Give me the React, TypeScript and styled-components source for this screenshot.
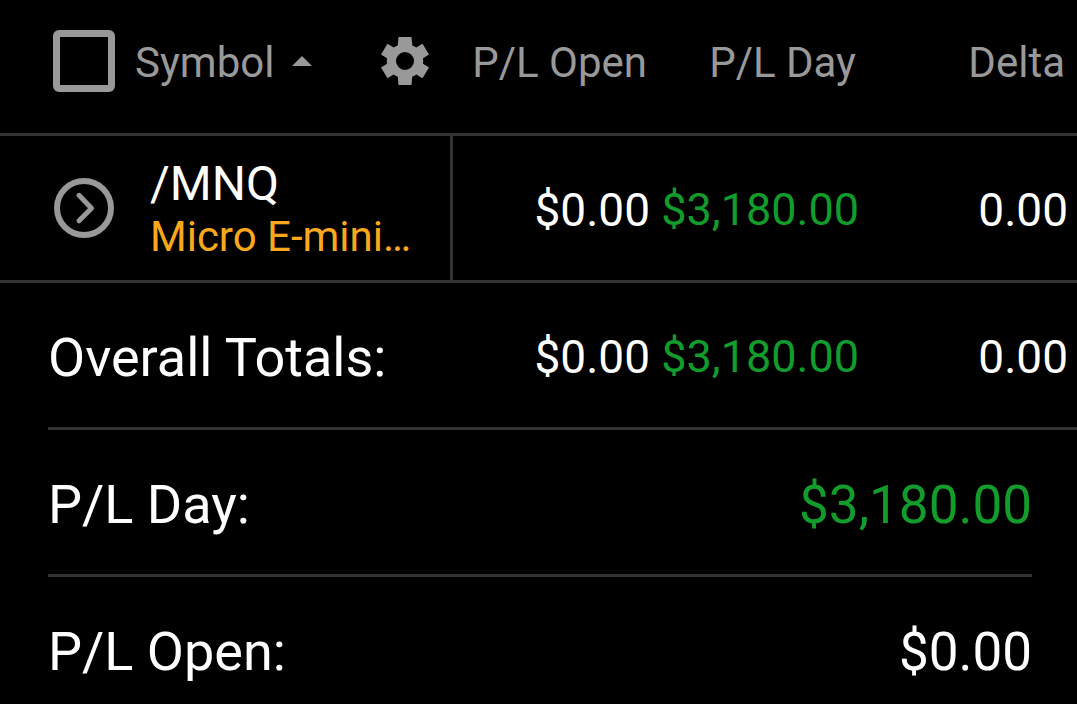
import React, { useState } from "react";
import styled, { createGlobalStyle } from "styled-components";

const color = {
  background: "#000000",
  text: "#ffffff",
  muted: "#999999",
  line: "#333333",
  gain: "#119c2b",
  name: "#f9a81c",
};

const GlobalStyle = createGlobalStyle`
  *, *::before, *::after { box-sizing: border-box; }
  body {
    margin: 0;
    background: ${color.background};
    color: ${color.text};
    font-family: Roboto, "Liberation Sans", sans-serif;
  }
`;

const Table = styled.table`
  width: 100%;
  table-layout: fixed;
  border-collapse: separate;
  border-spacing: 0;
`;

const ValueCol = styled.col`
  width: 209px;
`;

const HeadCell = styled.th`
  height: 136px;
  padding: 0 12px 8px 0;
  border-bottom: 3px solid ${color.line};
  color: ${color.muted};
  font-size: 42px;
  font-weight: 400;
  line-height: 48px;
  text-align: right;
  white-space: nowrap;
`;

const SymbolHeadCell = styled(HeadCell)`
  padding: 0 21px 12px 53px;
`;

const HeadGroup = styled.div`
  display: flex;
  align-items: center;
`;

const SelectAll = styled.input`
  appearance: none;
  flex: none;
  width: 62px;
  height: 62px;
  margin: 0;
  border: 7px solid ${color.muted};
  border-radius: 6px;
  &:checked {
    background: ${color.muted};
  }
`;

const PlainButton = styled.button`
  display: flex;
  align-items: center;
  padding: 0;
  border: 0;
  background: none;
  color: ${color.muted};
  font: inherit;
  cursor: pointer;
  svg {
    display: block;
  }
`;

const SortButton = styled(PlainButton)`
  gap: 18px;
  margin-left: 20px;
`;

const SortLabel = styled.span`
  padding-top: 4px;
`;

const SettingsButton = styled(PlainButton)`
  margin-left: auto;
`;

const SymbolCell = styled.th`
  height: 147px;
  padding: 0 32px 0 54px;
  border-bottom: 3px solid ${color.line};
  font-weight: 400;
  text-align: left;
`;

const SymbolGroup = styled.div`
  display: flex;
  align-items: center;
  gap: 36px;
`;

const SymbolText = styled.div`
  min-width: 0;
`;

const Ticker = styled.div`
  font-size: 48px;
  line-height: 58px;
`;

const InstrumentName = styled.div`
  color: ${color.name};
  font-size: 42px;
  line-height: 48px;
  white-space: nowrap;
`;

const ValueCell = styled.td<{ $gain?: boolean; $divided?: boolean; $ruled?: boolean }>`
  padding: ${(p) => (p.$gain ? 2 : 4)}px 9px 0 0;
  border-left: ${(p) => (p.$divided ? `3px solid ${color.line}` : "0")};
  border-bottom: ${(p) => (p.$ruled ? `3px solid ${color.line}` : "0")};
  color: ${(p) => (p.$gain ? color.gain : color.text)};
  font-size: ${(p) => (p.$gain ? 45 : 46)}px;
  text-align: right;
  white-space: nowrap;
`;

const TotalsLabel = styled.th`
  height: 144px;
  padding: 6px 0 0 48px;
  font-size: 54px;
  font-weight: 400;
  line-height: 64px;
  text-align: left;
  white-space: nowrap;
`;

const Summary = styled.dl`
  margin: 0 0 0 48px;
  border-top: 3px solid ${color.line};
`;

const SummaryRow = styled.div`
  display: flex;
  justify-content: space-between;
  margin-right: 45px;
  padding: 43px 0 37px;
  border-bottom: 3px solid ${color.line};
  line-height: 64px;
  &:last-child {
    padding-bottom: 16px;
    border-bottom: 0;
  }
`;

const SummaryLabel = styled.dt`
  font-size: 54px;
`;

const SummaryValue = styled.dd<{ $gain?: boolean }>`
  margin: 0;
  color: ${(p) => (p.$gain ? color.gain : color.text)};
  font-size: 53px;
`;

const SortArrow = () => (
  <svg width="20" height="10" viewBox="0 0 20 10" fill="currentColor" aria-hidden="true">
    <path d="M10 0 20 10H0Z" />
  </svg>
);

const Gear = () => (
  <svg width="48" height="48" viewBox="-24 -24 48 48" fill="currentColor" aria-hidden="true">
    <path
      fillRule="evenodd"
      d="M-6.5-24H6.5L7.3-15.6Q9.6-14.8 11.4-13.4L17.5-17.3 24-6.6 18-2.7Q18.4 0 18 2.7L24 6.6 17.5 17.3 11.4 13.4Q9.6 14.8 7.3 15.6L6.5 24H-6.5L-7.3 15.6Q-9.6 14.8-11.4 13.4L-17.5 17.3-24 6.6-18 2.7Q-18.4 0-18-2.7L-24-6.6-17.5-17.3-11.4-13.4Q-9.6-14.8-7.3-15.6ZM0-9A9 9 0 1 0 0 9 9 9 0 1 0 0-9Z"
    />
  </svg>
);

const CircleChevron = () => (
  <svg width="60" height="60" viewBox="0 0 60 60" fill="none" stroke="currentColor" aria-hidden="true">
    <circle cx="30" cy="30" r="27" strokeWidth="6" />
    <path d="M25 17.3 37.5 30.2 25 42.8" strokeWidth="5" strokeLinecap="round" strokeLinejoin="round" />
  </svg>
);

const positions = [
  { symbol: "/MNQ", name: "Micro E-mini…", open: "$0.00", day: "$3,180.00", delta: "0.00" },
];

export default function App() {
  const [selected, setSelected] = useState(false);

  return (
    <main>
      <GlobalStyle />
      <Table>
        <colgroup>
          <col />
          <ValueCol />
          <ValueCol />
          <ValueCol />
        </colgroup>
        <thead>
          <tr>
            <SymbolHeadCell scope="col">
              <HeadGroup>
                <SelectAll
                  type="checkbox"
                  aria-label="Select all"
                  checked={selected}
                  onChange={(e) => setSelected(e.target.checked)}
                />
                <SortButton type="button">
                  <SortLabel>Symbol</SortLabel>
                  <SortArrow />
                </SortButton>
                <SettingsButton type="button" aria-label="Settings">
                  <Gear />
                </SettingsButton>
              </HeadGroup>
            </SymbolHeadCell>
            <HeadCell scope="col">P/L Open</HeadCell>
            <HeadCell scope="col">P/L Day</HeadCell>
            <HeadCell scope="col">Delta</HeadCell>
          </tr>
        </thead>
        <tbody>
          {positions.map((p) => (
            <tr key={p.symbol}>
              <SymbolCell scope="row">
                <SymbolGroup>
                  <PlainButton type="button" aria-label={`Expand ${p.symbol}`}>
                    <CircleChevron />
                  </PlainButton>
                  <SymbolText>
                    <Ticker>{p.symbol}</Ticker>
                    <InstrumentName>{p.name}</InstrumentName>
                  </SymbolText>
                </SymbolGroup>
              </SymbolCell>
              <ValueCell $divided $ruled>{p.open}</ValueCell>
              <ValueCell $gain $ruled>{p.day}</ValueCell>
              <ValueCell $ruled>{p.delta}</ValueCell>
            </tr>
          ))}
        </tbody>
        <tfoot>
          <tr>
            <TotalsLabel scope="row">Overall Totals:</TotalsLabel>
            <ValueCell>$0.00</ValueCell>
            <ValueCell $gain>$3,180.00</ValueCell>
            <ValueCell>0.00</ValueCell>
          </tr>
        </tfoot>
      </Table>
      <Summary>
        <SummaryRow>
          <SummaryLabel>P/L Day:</SummaryLabel>
          <SummaryValue $gain>$3,180.00</SummaryValue>
        </SummaryRow>
        <SummaryRow>
          <SummaryLabel>P/L Open:</SummaryLabel>
          <SummaryValue>$0.00</SummaryValue>
        </SummaryRow>
      </Summary>
    </main>
  );
}
